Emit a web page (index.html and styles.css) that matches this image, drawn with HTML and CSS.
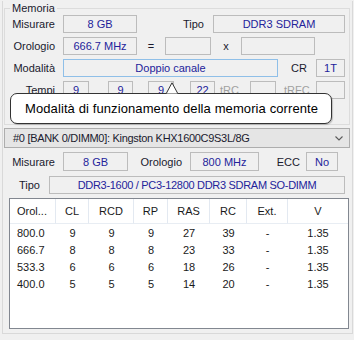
FILE: index.html
```html
<!DOCTYPE html>
<html lang="it">
<head>
    <meta charset="UTF-8">
    <title>CPU-Z Memoria</title>
    <link rel="stylesheet" href="styles.css">
</head>
<body>
    <div class="tab">
        <fieldset class="group">
            <legend>Memoria</legend>
            <div class="row">
                <span class="lbl">Misurare</span>
                <span class="box w74">8 GB</span>
                <span class="lbl l-tipo">Tipo</span>
                <span class="box w132">DDR3 SDRAM</span>
            </div>
            <div class="row">
                <span class="lbl">Orologio</span>
                <span class="box w74">666.7 MHz</span>
                <span class="sym w28">=</span>
                <span class="box w46"></span>
                <span class="sym w30">x</span>
                <span class="box w74"></span>
            </div>
            <div class="row">
                <span class="lbl">Modalità</span>
                <span class="box w215 hover">Doppio canale</span>
                <span class="lbl l-cr">CR</span>
                <span class="box w29">1T</span>
            </div>
            <div class="row last">
                <span class="lbl">Tempi</span>
                <span class="box w26">9</span>
                <span class="box w25 ml19">9</span>
                <span class="box w26 ml15">9</span>
                <span class="box w25 ml16">22</span>
                <span class="sub w35">tRC</span>
                <span class="box w26"></span>
                <span class="sub w40">tRFC</span>
                <span class="box w29"></span>
            </div>
        </fieldset>

        <div class="bank">
            <span>#0 [BANK 0/DIMM0]: Kingston KHX1600C9S3L/8G</span>
            <svg class="chev" width="8" height="5" viewBox="0 0 8 5"><path d="M0.5 0.5 L4 4 L7.5 0.5" fill="none" stroke="#5a5a5a" stroke-width="1.1"/></svg>
        </div>

        <div class="srow s1">
            <span class="lbl l-mis">Misurare</span>
            <span class="box w65">8 GB</span>
            <span class="lbl l-oro">Orologio</span>
            <span class="box w69">800 MHz</span>
            <span class="lbl l-ecc">ECC</span>
            <span class="box w32">No</span>
        </div>
        <div class="srow s2">
            <span class="lbl l-tipo2">Tipo</span>
            <span class="box w296">DDR3-1600 / PC3-12800 DDR3 SDRAM SO-DIMM</span>
        </div>

        <div class="timings">
            <div class="th left">Orol...</div>
            <div class="th">CL</div>
            <div class="th">RCD</div>
            <div class="th">RP</div>
            <div class="th">RAS</div>
            <div class="th">RC</div>
            <div class="th">Ext.</div>
            <div class="th end">V</div>

            <div class="td left">800.0</div><div class="td">9</div><div class="td">9</div><div class="td">9</div><div class="td">27</div><div class="td">39</div><div class="td">-</div><div class="td">1.35</div>
            <div class="td left">666.7</div><div class="td">8</div><div class="td">8</div><div class="td">8</div><div class="td">23</div><div class="td">33</div><div class="td">-</div><div class="td">1.35</div>
            <div class="td left">533.3</div><div class="td">6</div><div class="td">6</div><div class="td">6</div><div class="td">18</div><div class="td">26</div><div class="td">-</div><div class="td">1.35</div>
            <div class="td left">400.0</div><div class="td">5</div><div class="td">5</div><div class="td">5</div><div class="td">14</div><div class="td">20</div><div class="td">-</div><div class="td">1.35</div>
        </div>
    </div>

    <div class="tip">
        <svg class="tip-arrow" width="12" height="12" viewBox="0 0 12 12"><path d="M0.5 11.5 L6 0.8 L11.5 11.5 Z" fill="#fff" stroke="none"/><path d="M0.5 11 L6 0.8 L11.5 11" fill="none" stroke="#333"/></svg>
        Modalità di funzionamento della memoria corrente
    </div>
</body>
</html>
```

FILE: styles.css
```css
* {
    box-sizing: border-box;
}

body {
    margin: 0;
    width: 354px;
    height: 340px;
    overflow: hidden;
    background-color: #f0f0f0;
    font-family: "Liberation Sans", Arial, sans-serif;
    font-size: 11px;
    color: #1a1a2e;
}

.tab {
    margin-left: 2px;
    width: 351px;
    height: 333px;
    border: 1px solid #d9d9d9;
    border-top: none;
}

/* gruppo Memoria */
.group {
    margin: 1px 0 0 1px;
    width: 346px;
    min-width: 0;
    padding: 0 0 25px 0;
    border: 1px solid #dcdcdc;
}

.group legend {
    margin-left: 5px;
    padding: 0 2px;
    line-height: 14px;
}

.row {
    display: flex;
    align-items: center;
    height: 18px;
    margin-bottom: 4px;
}

.row.last {
    margin-bottom: 0;
}

.lbl {
    flex: none;
    width: 50px;
    margin-right: 8px;
    text-align: right;
    white-space: nowrap;
}

.box {
    flex: none;
    height: 18px;
    border: 1px solid #bcbcbc;
    display: flex;
    align-items: center;
    justify-content: center;
    color: #23239b;
    white-space: nowrap;
}

.box.hover {
    border-color: #8fbfe8;
}

.sym {
    flex: none;
    text-align: center;
}

.sub {
    flex: none;
    color: #a0a0a0;
}

.w25 { width: 25px; }
.w26 { width: 26px; }
.w28 { width: 28px; }
.w29 { width: 29px; }
.w30 { width: 30px; }
.w32 { width: 32px; }
.w35 { width: 35px; padding-left: 5px; }
.w40 { width: 40px; padding-left: 8px; }
.w46 { width: 46px; }
.w65 { width: 65px; }
.w69 { width: 69px; }
.w74 { width: 74px; }
.w132 { width: 132px; }
.w215 { width: 215px; }
.w296 { width: 296px; letter-spacing: -0.3px; }

.ml15 { margin-left: 15px; }
.ml16 { margin-left: 16px; }
.ml19 { margin-left: 19px; }

.l-tipo { width: 76px; margin-right: 0; padding-right: 9px; }
.l-cr { width: 38px; margin-right: 0; padding-right: 9px; }

/* slot */
.bank {
    margin: 3px 0 0 1px;
    width: 346px;
    height: 20px;
    padding: 0 6px 0 8px;
    border: 1px solid #adadad;
    background-color: #e5e5e5;
    display: flex;
    align-items: center;
    justify-content: space-between;
    letter-spacing: -0.3px;
    white-space: nowrap;
}

.srow {
    display: flex;
    align-items: center;
}

.srow.s1 {
    margin-top: 4px;
    height: 19px;
}

.srow.s1 .box {
    height: 19px;
}

.srow.s2 {
    margin-top: 5px;
    height: 18px;
}

.l-mis { width: 60px; margin-right: 0; padding-right: 8px; }
.l-oro { width: 62px; margin-right: 0; padding-right: 8px; }
.l-ecc { width: 47px; margin-right: 0; padding-right: 6px; }
.l-tipo2 { width: 46px; margin-right: 0; padding-right: 9px; }

/* tabella tempi */
.timings {
    margin: 4px 0 0 6px;
    width: 340px;
    height: 131px;
    border: 1px solid #828790;
    background-color: #fff;
    display: grid;
    grid-template-columns: 46px 33px 45px 34px 42px 37px 41px 60px;
    grid-template-rows: 25px;
    grid-auto-rows: 17px;
    align-content: start;
    color: #1a1a1a;
}

.th {
    display: flex;
    align-items: center;
    justify-content: center;
    border-right: 1px solid #e3e9f1;
    border-bottom: 1px solid #e8edf3;
}

.th.end {
    border-right: none;
}

.td {
    display: flex;
    align-items: center;
    justify-content: center;
}

.th.left,
.td.left {
    justify-content: flex-start;
    padding-left: 7px;
}

/* tooltip */
.tip {
    position: absolute;
    left: 10px;
    top: 93px;
    width: 322px;
    height: 31px;
    padding-left: 14px;
    border: 1px solid #333;
    border-radius: 7px;
    background-color: #fff;
    box-shadow: 1px 1px 1px rgba(0, 0, 0, 0.2);
    display: flex;
    align-items: center;
    font-size: 13px;
    letter-spacing: 0.1px;
    color: #000;
    white-space: nowrap;
}

.tip-arrow {
    position: absolute;
    left: 155px;
    top: -12px;
}
```
